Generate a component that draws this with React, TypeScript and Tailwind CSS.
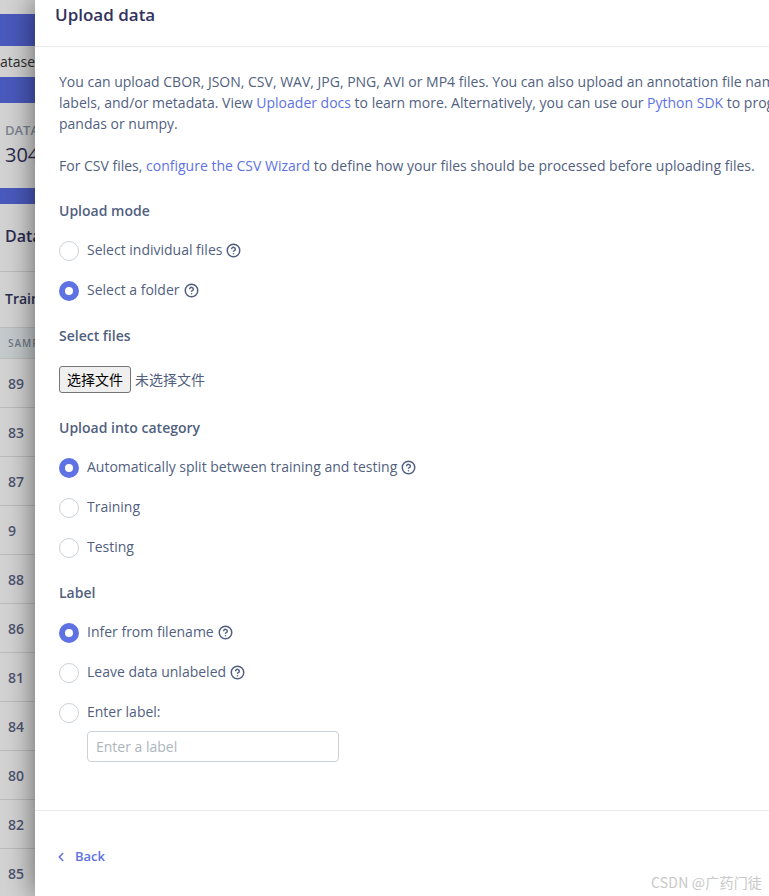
import { ChevronLeft, CircleHelp } from 'lucide-react';

const SAMPLE_ROWS = ['89', '83', '87', '9', '88', '86', '81', '84', '80', '82', '85'];

function Radio({ label, checked, help }: { label: string; checked?: boolean; help?: boolean }) {
  return (
    <div className="flex h-[20px] items-center">
      {checked ? (
        <span className="flex h-5 w-5 shrink-0 items-center justify-center rounded-full bg-[#5e72e4]">
          <span className="h-2 w-2 rounded-full bg-white" />
        </span>
      ) : (
        <span className="h-5 w-5 shrink-0 rounded-full border border-[#cad1d7] bg-white" />
      )}
      <span className="relative top-[-1px] ml-2 flex items-center text-sm text-[#525f7f]">
        {label}
        {help && <CircleHelp className="ml-[4px] h-[15px] w-[15px] text-[#525f7f]" strokeWidth={2.4} />}
      </span>
    </div>
  );
}

function Heading({ children }: { children: string }) {
  return <h3 className="text-sm leading-[21px] font-semibold text-[#525f7f]">{children}</h3>;
}

function Background() {
  return (
    <div className="flex w-[35px] shrink-0 flex-col overflow-hidden bg-[#d3d3d3] text-[#22264a]">
      <div className="h-[14px] shrink-0" />
      <div className="h-[32px] shrink-0 bg-[#4a59bd]" />
      <div className="flex h-[31px] shrink-0 items-center justify-end overflow-hidden whitespace-nowrap text-sm text-[#2c2c2c]">atase</div>
      <div className="h-[26px] shrink-0 bg-[#4a59bd]" />
      <div className="h-[85px] shrink-0 pt-[20px] pl-[5px] whitespace-nowrap">
        <div className="text-[13px] leading-[14px] font-semibold text-[#7d8291]">DATASET</div>
        <div className="mt-[6px] text-xl leading-[24px] font-medium text-[#2a2c50]">3040</div>
      </div>
      <div className="h-[16px] shrink-0 bg-[#4a59bd]" />
      <div className="flex h-[67px] shrink-0 items-center pb-[4px] pl-[5px] text-base font-semibold whitespace-nowrap text-[#2a2c50]">Data</div>
      <div className="flex h-[56px] shrink-0 items-center border-t border-[#bcbcbc] pb-[2px] pl-[5px] text-sm font-semibold whitespace-nowrap text-[#2a2c50]">Training</div>
      <div className="flex h-[32px] shrink-0 items-center border-y border-[#bcbcbc] bg-[#c5cacc] pl-[8px] text-[10px] font-semibold tracking-[1px] whitespace-nowrap text-[#737a88]">SAMPLE</div>
      {SAMPLE_ROWS.map(row => (
        <div key={row} className="flex h-[49px] shrink-0 items-center border-b border-[#bcbcbc] pt-[2px] pl-[8px] text-sm font-semibold text-[#4f5470]">
          {row}
        </div>
      ))}
    </div>
  );
}

export default function App() {
  return (
    <div className="relative flex h-[896px] w-[769px] overflow-hidden bg-white font-['Open_Sans',sans-serif]">
      <Background />
      <div className="relative flex w-[734px] shrink-0 flex-col bg-white shadow-[0_0_28px_rgba(0,0,0,0.55)]">
        <header className="h-[47px] shrink-0 border-b border-[#e9ecef] pl-[20px]">
          <h2 className="text-[17px] leading-[29px] font-semibold text-[#32325d]">Upload data</h2>
        </header>

        <div className="flex-1 overflow-hidden pt-[24px] pl-[24px] whitespace-nowrap">
          <p className="text-sm leading-[21px] text-[#525f7f]">
            You can upload CBOR, JSON, CSV, WAV, JPG, PNG, AVI or MP4 files. You can also upload an annotation file named
            <br />
            labels, and/or metadata. View <span className="text-[#5e72e4]">Uploader docs</span> to learn more. Alternatively, you can use our{' '}
            <span className="text-[#5e72e4]">Python SDK</span> to programmatically upload
            <br />
            pandas or numpy.
          </p>
          <p className="mt-[21px] text-sm leading-[21px] text-[#525f7f]">
            For CSV files, <span className="text-[#5e72e4]">configure the CSV Wizard</span> to define how your files should be processed before uploading files.
          </p>

          <div className="mt-[24px]">
            <Heading>Upload mode</Heading>
            <div className="mt-[20px] flex flex-col gap-[20px]">
              <Radio label="Select individual files" help />
              <Radio label="Select a folder" checked help />
            </div>
          </div>

          <div className="mt-[24px]">
            <Heading>Select files</Heading>
            <div className="mt-[20px] flex h-[27px] items-center font-['Open_Sans','Noto_Sans_CJK_SC',sans-serif]">
              <button className="h-[27px] w-[72px] rounded-[3px] border border-[#767676] bg-[#efefef] text-sm text-black">选择文件</button>
              <span className="ml-[4px] text-sm text-[#525f7f]">未选择文件</span>
            </div>
          </div>

          <div className="mt-[24px]">
            <Heading>Upload into category</Heading>
            <div className="mt-[20px] flex flex-col gap-[20px]">
              <Radio label="Automatically split between training and testing" checked help />
              <Radio label="Training" />
              <Radio label="Testing" />
            </div>
          </div>

          <div className="mt-[24px]">
            <Heading>Label</Heading>
            <div className="mt-[20px] flex flex-col gap-[20px]">
              <Radio label="Infer from filename" checked help />
              <Radio label="Leave data unlabeled" help />
              <Radio label="Enter label:" />
            </div>
            <input
              placeholder="Enter a label"
              className="mt-[8px] ml-[28px] block h-[31px] w-[252px] rounded-[4px] border border-[#cad1d7] px-[8px] text-sm text-[#525f7f] placeholder:text-[#adb5bd]"
            />
          </div>
        </div>

        <footer className="flex h-[86px] shrink-0 items-center border-t border-[#e9ecef] pt-[6px] pl-[19px]">
          <ChevronLeft className="h-[14px] w-[14px] text-[#5e72e4]" strokeWidth={2.6} />
          <span className="ml-[7px] text-[13px] font-semibold text-[#5e72e4]">Back</span>
        </footer>
      </div>

      <div className="absolute top-[872px] left-[651px] font-['Noto_Sans_CJK_SC',sans-serif] text-sm leading-[20px] tracking-[0.2px] text-[#c8c8c8]">CSDN @广药门徒</div>
    </div>
  );
}
